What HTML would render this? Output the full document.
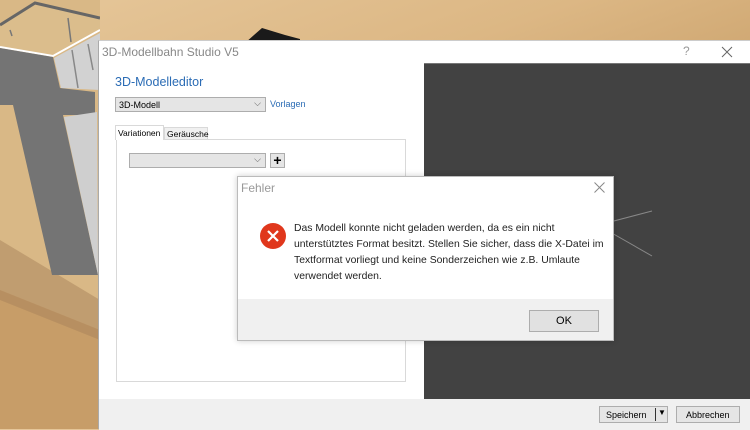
<!DOCTYPE html>
<html><head><meta charset="utf-8"><style>
*{margin:0;padding:0;box-sizing:border-box}
body{width:750px;height:429px;overflow:hidden;position:relative;font-family:"Liberation Sans",sans-serif;background:linear-gradient(160deg,#e6c79a 0%,#dcb784 30%,#c9a06a 55%,#e2c18f 75%,#d4ad78 100%)}
.a{position:absolute}
.t{font-size:11px;color:#000}
</style></head><body>
<svg class="a" style="left:0;top:0" width="100" height="429">
<rect width="100" height="429" fill="#d9b886"/>
<polygon points="0,290 100,330 100,429 0,429" fill="#c79d68"/>
<polygon points="0,240 100,300 100,340 0,300" fill="#a8825a" opacity=".5"/>
<polygon points="0,25 35,3 100,18 100,30 53,57 0,48" fill="#dbbd8c"/>
<polyline points="0,25 35,3 100,18" fill="none" stroke="#666" stroke-width="3"/>
<polyline points="0,47 53,56 100,30" fill="none" stroke="#fff" stroke-width="2"/>
<path d="M10 30 L12 36 M68 18 L71 42" stroke="#777" stroke-width="1.5"/>
<polygon points="0,48 53,57 60,88 95,92 95,115 63,115 98,275 52,275 13,105 0,105" fill="#747474"/>
<polygon points="54,58 100,33 100,90 61,88" fill="#d2d2d2"/>
<polygon points="64,117 97,112 98,275" fill="#cfcfcf"/>
<path d="M72 50 L78 88 M88 44 L93 70" stroke="#888" stroke-width="1.5"/>
</svg>
<svg class="a" style="left:240px;top:25px" width="60" height="20"><polygon points="5,18 22,3 45,10 60,14 60,18" fill="#1a1a1a"/></svg>
<div class="a" style="left:98px;top:40px;width:652px;height:389px;background:#fff;border-left:1px solid #aaa;border-top:1px solid #ccc">
<div class="a" style="left:3px;top:4px;font-size:12px;color:#888">3D-Modellbahn Studio V5</div>
<div class="a" style="left:584px;top:3px;font-size:12px;color:#999">?</div>
<svg class="a" style="left:622px;top:5px" width="12" height="12"><path d="M1 1 L11 11 M11 1 L1 11" stroke="#666" stroke-width="1"/></svg>
<div class="a" style="left:16px;top:34px;font-size:12.5px;color:#2b6cb5">3D-Modelleditor</div>
<div class="a t" style="left:16px;top:56px;width:151px;height:15px;background:#e5e5e5;border:1px solid #adadad;font-size:9px;padding:2px 3px">3D-Modell<span class="a" style="right:4px;top:0px;color:#555">⌵</span></div>
<div class="a" style="left:171px;top:58px;font-size:9px;color:#2b6cb5">Vorlagen</div>
<div class="a" style="left:16px;top:84px;width:49px;height:15px;background:#fff;border:1px solid #d9d9d9;border-bottom:none;font-size:8.5px;padding:2px 2px;z-index:2">Variationen</div>
<div class="a" style="left:65px;top:86px;width:44px;height:13px;background:#f0f0f0;border:1px solid #d9d9d9;font-size:8.5px;padding:1px 2px">Geräusche</div>
<div class="a" style="left:17px;top:98px;width:290px;height:243px;border:1px solid #d9d9d9;background:#fff"></div>
<div class="a" style="left:30px;top:112px;width:137px;height:15px;background:#e5e5e5;border:1px solid #adadad"><span class="a" style="right:4px;top:0;font-size:9px;color:#555">⌵</span></div>
<div class="a" style="left:171px;top:112px;width:15px;height:15px;background:#e5e5e5;border:1px solid #adadad;font-size:14px;line-height:12px;text-align:center;font-weight:bold">+</div>
<div class="a" style="left:325px;top:22px;width:327px;height:337px;background:#424242;border-top:1px solid #777"></div>
<div class="a" style="left:0;top:358px;width:652px;height:31px;background:#f0f0f0"></div>
<div class="a" style="left:500px;top:365px;width:69px;height:17px;background:#e5e5e5;border:1px solid #adadad;font-size:9px;padding:3px 6px">Speichern<span class="a" style="left:55px;top:1px;border-left:1px solid #333;height:13px;padding-left:2px;font-size:8px">▼</span></div>
<div class="a" style="left:577px;top:365px;width:64px;height:17px;background:#e5e5e5;border:1px solid #adadad;font-size:9px;padding:3px 9px">Abbrechen</div>
</div>
<svg class="a" style="left:600px;top:205px" width="60" height="60"><path d="M10 17 L52 6 M10 27 L52 51" stroke="#888" stroke-width="1"/></svg>
<div class="a" style="left:237px;top:176px;width:377px;height:165px;background:#fff;border:1px solid #bbb;box-shadow:0 0 6px rgba(0,0,0,.2)">
<div class="a" style="left:3px;top:4px;font-size:12px;color:#999">Fehler</div>
<svg class="a" style="left:356px;top:5px" width="11" height="11"><path d="M0.5 0.5 L10.5 10.5 M10.5 0.5 L0.5 10.5" stroke="#888" stroke-width="1"/></svg>
<svg class="a" style="left:21px;top:45px" width="28" height="28"><circle cx="14" cy="14" r="13" fill="#e0371c"/><path d="M9 9 L19 19 M19 9 L9 19" stroke="#fff" stroke-width="2.2"/></svg>
<div class="a" style="left:56px;top:44px;width:320px;font-size:10.4px;line-height:16px;color:#222">Das Modell konnte nicht geladen werden, da es ein nicht unterstütztes Format besitzt. Stellen Sie sicher, dass die X-Datei im Textformat vorliegt und keine Sonderzeichen wie z.B. Umlaute verwendet werden.</div>
<div class="a" style="left:0;top:122px;width:375px;height:41px;background:#f0f0f0"></div>
<div class="a" style="left:291px;top:133px;width:70px;height:22px;background:#e1e1e1;border:1px solid #adadad;font-size:11px;text-align:center;line-height:20px">OK</div>
</div>
</body></html>
